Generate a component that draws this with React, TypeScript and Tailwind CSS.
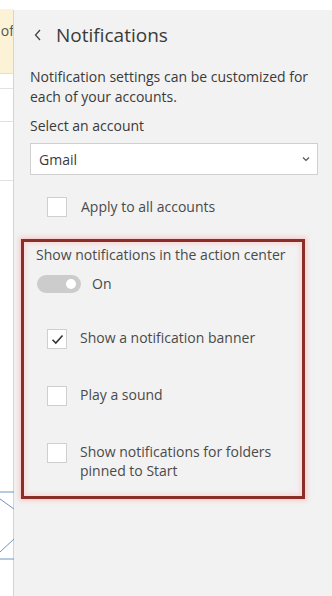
import { useState } from "react";

const font = { fontFamily: '"Open Sans", "Noto Sans", sans-serif' };

const CheckBox = ({ checked }: { checked?: boolean }) => (
  <span className="w-[20px] h-[20px] shrink-0 bg-white border border-[#cfcfcf] flex items-center justify-center">
    {checked && (
      <svg width="13" height="11" viewBox="0 0 13 11" fill="none">
        <path d="M1.5 5.8 L4.8 9 L11.5 1.5" stroke="#333" strokeWidth="1.6" />
      </svg>
    )}
  </span>
);

const Option = ({ checked, children }: { checked?: boolean; children: React.ReactNode }) => (
  <div className="flex items-start gap-[13px] pl-[23px]">
    <CheckBox checked={checked} />
    <span className="text-[14px] leading-[19px] text-[#4a4a4a] -mt-[1px]">{children}</span>
  </div>
);

export default function App() {
  const [on] = useState(true);

  return (
    <div className="w-[332px] h-[596px] bg-white flex flex-col overflow-hidden" style={font}>
      <div className="h-[10px] bg-white" />
      <div className="flex flex-1">
        {/* left list strip, mostly hidden */}
        <div className="w-[14px] border-r border-[#d4d4d4] bg-white flex flex-col relative">
          <div className="h-[65px] bg-[#fcf3d6] border-b border-[#e8e0c6] text-[14px] text-[#555] leading-none flex items-center justify-end overflow-hidden -mt-px">
            <span className="-mr-[1px] -mt-[20px]">of</span>
          </div>
          <div className="h-[15px] border-b border-[#e2e2e2]" />
          <div className="h-[33px] border-b border-[#e2e2e2]" />
          <div className="h-[59px] border-b border-[#e2e2e2]" />
          <svg className="absolute left-0 top-[478px]" width="14" height="72" viewBox="0 0 14 72" fill="none">
            <path d="M0 4 H14" stroke="#6a98c0" strokeWidth="1" />
            <path d="M0 11 L14 21" stroke="#6a98c0" strokeWidth="1" />
            <path d="M0 64 L14 51" stroke="#6a98c0" strokeWidth="1" />
            <path d="M0 71 H14" stroke="#6a98c0" strokeWidth="1" />
          </svg>
        </div>

        {/* notifications pane */}
        <div className="flex-1 bg-[#f2f2f2] flex flex-col pl-[16px] pr-[14px]">
          <div className="flex items-center gap-[13px] mt-[11px] h-[28px] text-[#3a3a3a]">
            <svg width="10" height="14" viewBox="0 0 10 14" className="ml-[3px]" fill="none">
              <path d="M7 2 L2.5 7 L7 12" stroke="#444" strokeWidth="1.3" />
            </svg>
            <span className="text-[19px] leading-none">Notifications</span>
          </div>

          <p className="mt-[18px] text-[14px] leading-[20px] text-[#3a3a3a]">
            Notification settings can be customized for each of your accounts.
          </p>

          <div className="mt-[9px] text-[14px] leading-[20px] text-[#3a3a3a]">Select an account</div>

          <div className="mt-[7px] h-[32px] bg-white border border-[#d0d0d0] flex items-center justify-between pl-[8px] pr-[7px]">
            <span className="text-[14px] text-[#3a3a3a]">Gmail</span>
            <svg width="8" height="6" viewBox="0 0 8 6" fill="none">
              <path d="M1 1.5 L4 4.5 L7 1.5" stroke="#555" strokeWidth="1.2" />
            </svg>
          </div>

          <div className="mt-[21px]">
            <div className="flex items-center gap-[14px] pl-[17px]">
              <CheckBox />
              <span className="text-[14px] text-[#4a4a4a]">Apply to all accounts</span>
            </div>
          </div>

          <div className="mt-[22px] -ml-[9px] w-[284px] border-[3px] border-[#8a2e28] shadow-[0_0_4px_2px_rgba(255,180,180,0.6),inset_0_0_4px_2px_rgba(255,190,190,0.5)] pt-[3px] pb-[16px]">
            <div className="pl-[12px] text-[14px] leading-[20px] text-[#4a4a4a]">
              Show notifications in the action center
            </div>
            <div className="flex items-center gap-[11px] pl-[13px] mt-[8px]">
              <span className="w-[44px] h-[18px] rounded-full bg-[#cccccc] flex items-center justify-end pr-[5px]">
                {on && <span className="w-[10px] h-[10px] rounded-full bg-white" />}
              </span>
              <span className="text-[14px] text-[#4a4a4a]">On</span>
            </div>

            <div className="flex flex-col gap-[37px] mt-[35px]">
              <Option checked>Show a notification banner</Option>
              <Option>Play a sound</Option>
              <Option>
                Show notifications for folders
                <br />
                pinned to Start
              </Option>
            </div>
          </div>
        </div>
      </div>
    </div>
  );
}
